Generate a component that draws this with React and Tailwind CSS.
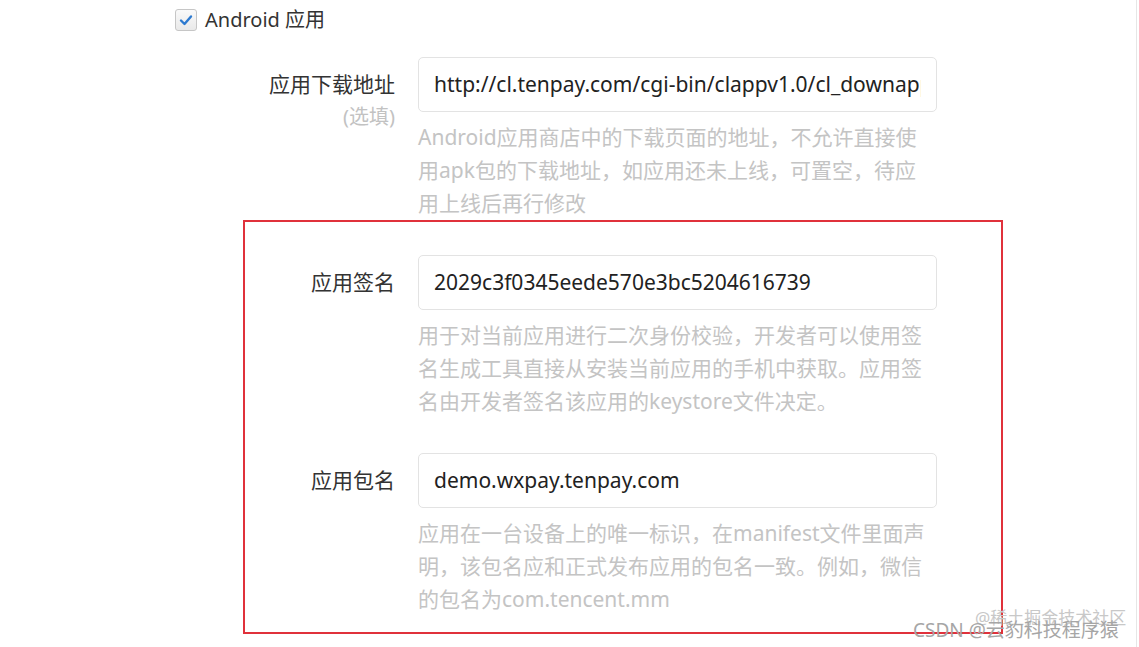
import React from 'react';

const FONT = { fontFamily: '"Noto Sans", "Noto Sans CJK SC", sans-serif' };

const Field = ({ label, sub, value, help, labelW }) => (
  <div className="flex">
    <div className="shrink-0 text-right pr-[23px]" style={{ width: labelW }}>
      <div className="h-[55px] flex items-center justify-end text-[21px] text-[#333]">{label}</div>
      {sub && <div className="-mt-[8px] text-[20px] text-[#c2c2c2] leading-[26px]">{sub}</div>}
    </div>
    <div className="w-[519px]">
      <div className="h-[55px] rounded-[5px] border border-[#e3e3e3] bg-white flex items-center px-[15px]">
        <div className="flex-1 overflow-hidden whitespace-nowrap text-[21px] text-[#222]">{value}</div>
      </div>
      <div className="mt-[9px] text-[21px] leading-[33px] text-[#c4c4c4]">
        {help.map((l, i) => (
          <div key={i} className="whitespace-nowrap">{l}</div>
        ))}
      </div>
    </div>
  </div>
);

export default function App() {
  return (
    <div className="relative w-[1139px] h-[647px] bg-white overflow-hidden" style={FONT}>
      <div className="w-[1137px] h-full border-r border-[#e6e6e6]">
        {/* checkbox row */}
        <div className="flex items-center pl-[175px] pt-[9px] h-[31px]">
          <div className="w-[22px] h-[22px] rounded-[3px] border border-[#c6c6c6] bg-gradient-to-b from-[#fafafa] to-[#e9e9e9] flex items-center justify-center">
            <svg width="14" height="12" viewBox="0 0 14 12">
              <path d="M2 6.5 L5.5 10 L12 2.5" fill="none" stroke="#2d7ad0" strokeWidth="2.4" strokeLinecap="round" strokeLinejoin="round" />
            </svg>
          </div>
          <span className="ml-[8px] text-[20px] text-[#333]">Android 应用</span>
        </div>

        <div className="mt-[26px]">
          <Field
            labelW={418}
            label="应用下载地址"
            sub="(选填)"
            value="http://cl.tenpay.com/cgi-bin/clappv1.0/cl_downapp.cgi"
            help={[
              'Android应用商店中的下载页面的地址，不允许直接使',
              '用apk包的下载地址，如应用还未上线，可置空，待应',
              '用上线后再行修改',
            ]}
          />
        </div>

        {/* highlighted box */}
        <div className="ml-[243px] w-[760px] h-[414px] border-2 border-[#e0313b] pt-[33px]">
          <Field
            labelW={173}
            label="应用签名"
            value="2029c3f0345eede570e3bc5204616739"
            help={[
              '用于对当前应用进行二次身份校验，开发者可以使用签',
              '名生成工具直接从安装当前应用的手机中获取。应用签',
              '名由开发者签名该应用的keystore文件决定。',
            ]}
          />
          <div className="mt-[35px]">
            <Field
              labelW={173}
              label="应用包名"
              value="demo.wxpay.tenpay.com"
              help={[
                '应用在一台设备上的唯一标识，在manifest文件里面声',
                '明，该包名应和正式发布应用的包名一致。例如，微信',
                '的包名为com.tencent.mm',
              ]}
            />
          </div>
        </div>
      </div>

      {/* watermarks */}
      <div className="absolute left-[975px] top-[605px] text-[17px] text-[#c8c8c8] whitespace-nowrap">@稀土掘金技术社区</div>
      <div className="absolute left-[913px] top-[616px] text-[19px] text-[#a6a6a6] whitespace-nowrap">CSDN @云豹科技程序猿</div>
    </div>
  );
}
